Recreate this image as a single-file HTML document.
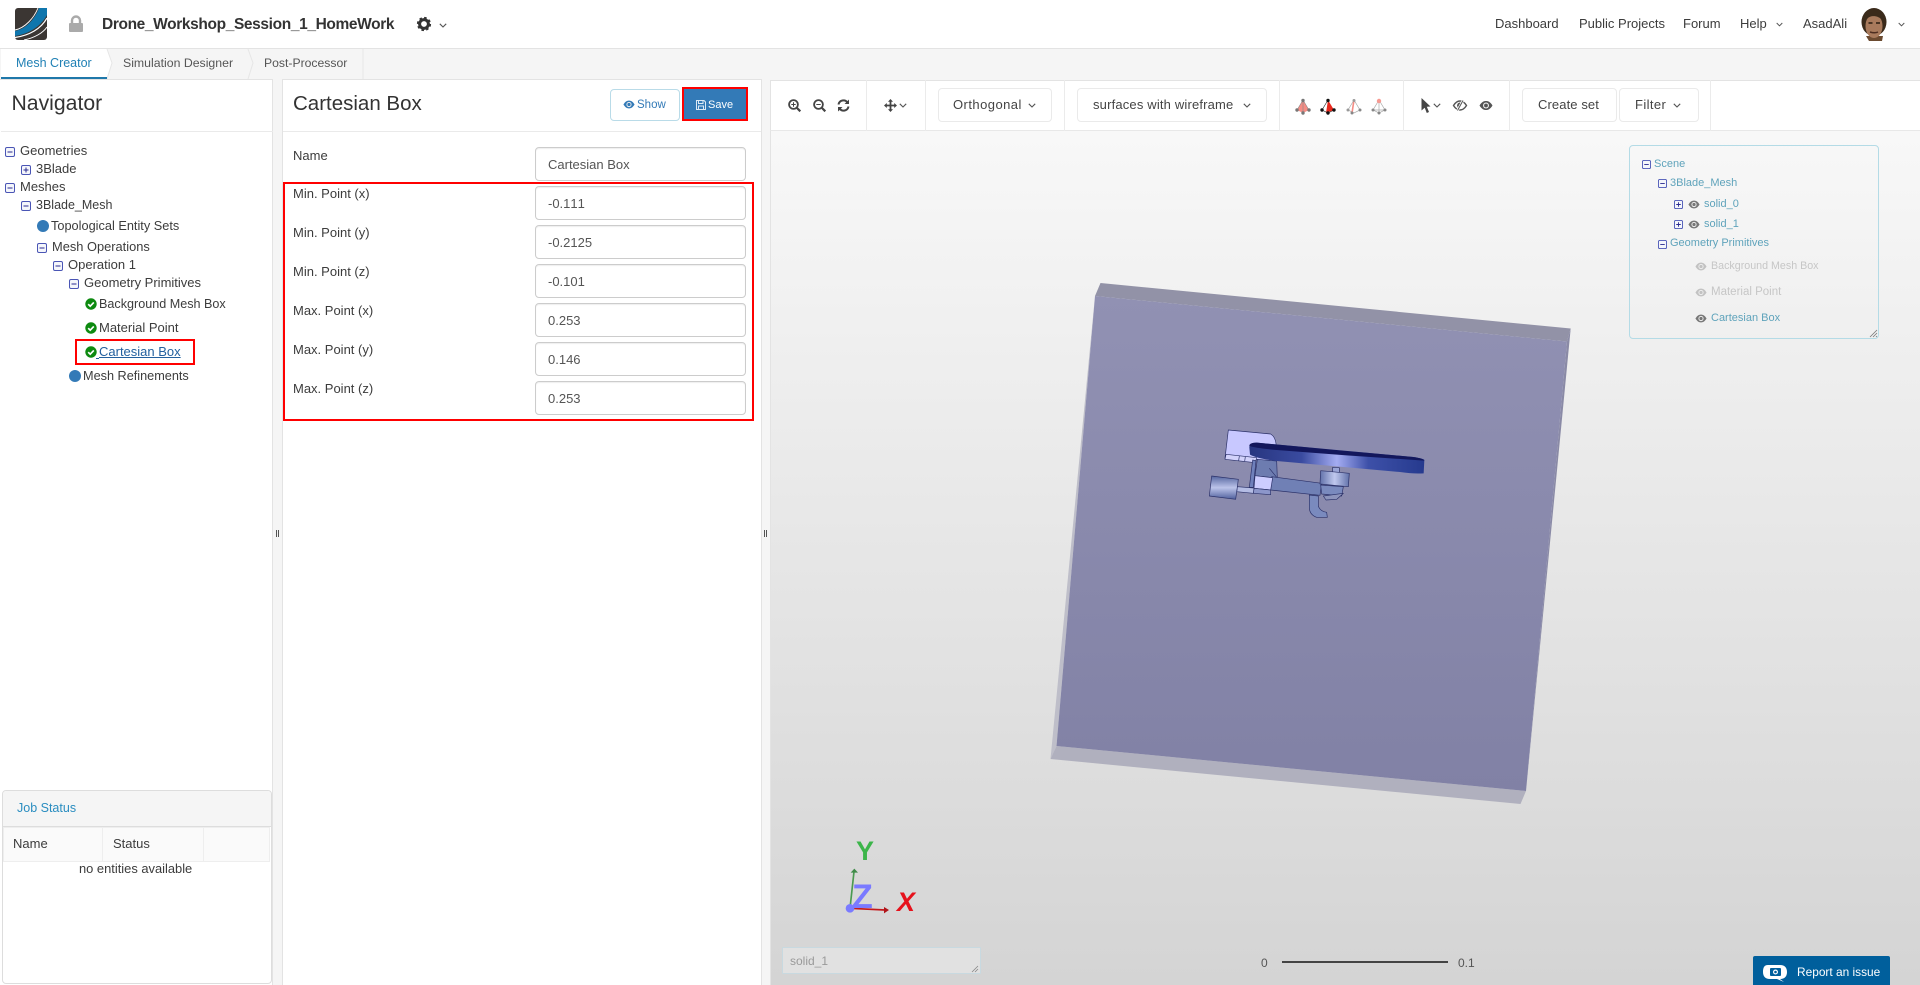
<!DOCTYPE html>
<html><head><meta charset="utf-8"><title>Mesh Creator</title>
<style>
html,body{margin:0;padding:0;width:1920px;height:985px;overflow:hidden;background:#fff}
body{position:relative;font-family:"Liberation Sans",sans-serif;font-size:13px;color:#3c3c3c}
.a{position:absolute}
.t{position:absolute;white-space:nowrap;line-height:20px}
.in{position:absolute;left:535px;width:209px;height:32px;border:1px solid #ccc;border-radius:4px;background:#fff;box-shadow:inset 0 1px 1px rgba(0,0,0,.07);line-height:34px;color:#555;text-indent:12px;font-size:13px;font-kerning:none}
.btn{position:absolute;top:88px;height:32px;border:1px solid #eaeaea;border-radius:4px;background:#fff;box-sizing:content-box}
.sep{position:absolute;top:80px;width:1px;height:51px;background:#ebebeb}
.sc{color:#5fa3bb;font-size:11px}
.sg{color:#c6c6c6;font-size:10.700px}
svg{position:absolute;overflow:visible}
</style></head><body>

<svg width="0" height="0" style="left:0;top:0"><defs>
<symbol id="mi" viewBox="0 0 10 10" overflow="visible"><rect x=".5" y=".5" width="9" height="9" rx="1.500" fill="#f4f6fb" stroke="#4a55b5"/><path d="M2.500 5h5" stroke="#2a2a90"/></symbol>
<symbol id="pl" viewBox="0 0 10 10" overflow="visible"><rect x=".5" y=".5" width="9" height="9" rx="1.500" fill="#f4f6fb" stroke="#4a55b5"/><path d="M2.500 5h5M5 2.500v5" stroke="#2a2a90"/></symbol>
<symbol id="ck" viewBox="0 0 12 12"><circle cx="6" cy="6" r="5.700" fill="#0d8a10"/><path d="M3.200 6.200l2 2 3.600-3.800" fill="none" stroke="#fff" stroke-width="1.700"/></symbol>
<symbol id="ey" viewBox="0 0 14 10"><path d="M.5 5C3 1 5 .5 7 .5S11 1 13.500 5C11 9 9 9.500 7 9.500S3 9 .5 5Z" fill="currentColor"/><circle cx="7" cy="5" r="3" fill="#eee"/><circle cx="7" cy="5" r="1.900" fill="currentColor"/></symbol>
<symbol id="ch" viewBox="0 0 8 5"><path d="M.8.8L4 4 7.200.8" fill="none" stroke="#555" stroke-width="1.100"/></symbol>
<linearGradient id="gf" x1="0" y1="0" x2="0" y2="1"><stop offset="0" stop-color="#9191b3"/><stop offset="1" stop-color="#8181a5"/></linearGradient>
<linearGradient id="gd" x1="0" y1="0" x2="1" y2="0"><stop offset="0" stop-color="#27357f"/><stop offset=".3" stop-color="#3a4ba0"/><stop offset=".5" stop-color="#a4acf2"/><stop offset=".68" stop-color="#3d50a8"/><stop offset="1" stop-color="#263a8e"/></linearGradient>
<linearGradient id="gc" x1="0" y1="0" x2="0" y2="1"><stop offset="0" stop-color="#55659f"/><stop offset=".5" stop-color="#bcc4ea"/><stop offset="1" stop-color="#4f5f9c"/></linearGradient>
<linearGradient id="gm" x1="0" y1="0" x2="1" y2="0"><stop offset="0" stop-color="#6272aa"/><stop offset=".5" stop-color="#c0c8ee"/><stop offset="1" stop-color="#6272aa"/></linearGradient>
</defs></svg>

<!-- header -->
<div class="a" style="left:0;top:0;width:1920px;height:48px;background:#fff;border-bottom:1px solid #e3e3e3"></div>
<svg style="left:15px;top:8px" width="32" height="32" viewBox="0 0 32 32"><rect width="32" height="32" rx="3" fill="#3b3633"/><path d="M0 23C11 21 20 11 24 0H32V7C26 18 14 26 0 28Z" fill="#0f76ad"/><path d="M0 22C10 20 19 10 23 0" stroke="#fff" stroke-width=".9" fill="none"/><path d="M0 29.500C14 27.500 26 21 32 10" stroke="#fff" stroke-width="1.300" fill="none"/><path d="M9 32C19 30 28 25 32 19" stroke="#fff" stroke-width="1" fill="none"/></svg>
<svg style="left:69px;top:15px" width="14" height="17" viewBox="0 0 14 17"><path d="M3 9V5.500a4 4 0 0 1 8 0V9" fill="none" stroke="#aaa" stroke-width="2.400"/><rect y="8" width="14" height="9" rx="1" fill="#aaa"/></svg>
<div class="t" style="left:102px;top:15px;font-size:15.500px;font-weight:bold;color:#333;letter-spacing:-.37px">Drone_Workshop_Session_1_HomeWork</div>
<svg style="left:417px;top:17px" width="14" height="14" viewBox="0 0 14 14"><circle cx="7" cy="7" r="4.400" fill="none" stroke="#333" stroke-width="3"/><circle cx="7" cy="7" r="6" fill="none" stroke="#333" stroke-width="2.200" stroke-dasharray="2.500 2.200"/></svg>
<svg style="left:439px;top:23px" width="8" height="5"><use href="#ch"/></svg>
<div class="t" style="left:1495px;top:14px">Dashboard</div>
<div class="t" style="left:1579px;top:14px">Public Projects</div>
<div class="t" style="left:1683px;top:14px">Forum</div>
<div class="t" style="left:1740px;top:14px">Help</div>
<svg style="left:1776px;top:22px" width="7" height="5"><use href="#ch"/></svg>
<div class="t" style="left:1803px;top:14px">AsadAli</div>
<svg style="left:1861px;top:8px" width="27" height="33" viewBox="0 0 27 33"><ellipse cx="13" cy="14" rx="12.500" ry="14" fill="#3a2a1a"/><path d="M5 28L22 28 21 33H8Z" fill="#6b4a30"/><ellipse cx="13" cy="18" rx="8.500" ry="12" fill="#a87a5c"/><path d="M6 11C9 7 17 7 21 12L20 5H7Z" fill="#3a2a1a"/><path d="M7.500 15h4M15 15h4" stroke="#2b1c10" stroke-width="1.500"/><path d="M9 24c3 1 6 1 8 0" stroke="#4d2d20" stroke-width="1.500" fill="none"/></svg>
<svg style="left:1898px;top:22px" width="7" height="5"><use href="#ch"/></svg>

<!-- tabs -->
<div class="a" style="left:0;top:49px;width:1920px;height:31px;background:#f5f5f5"></div>
<svg style="left:0;top:49px" width="370" height="31" viewBox="0 0 370 31"><path d="M1 0H107L112 14 107 28V28H1Z" fill="#fff"/><path d="M107 0L112 14 107 30M248 0L253 14 248 30M363 0V30" fill="none" stroke="#e6e6e6"/></svg>
<div class="a" style="left:1px;top:77px;width:106px;height:2px;background:#1f78aa"></div>
<div class="t" style="left:16px;top:53px;color:#2181b5;font-size:12.500px">Mesh Creator</div>
<div class="t" style="left:123px;top:53px;color:#555;font-size:12.300px">Simulation Designer</div>
<div class="t" style="left:264px;top:53px;color:#555;font-size:12.200px">Post-Processor</div>

<!-- gutters and panels -->
<div class="a" style="left:0;top:79px;width:273px;height:906px;background:#fff;border-top:1px solid #e3e3e3;border-right:1px solid #e3e3e3;box-sizing:border-box"></div>
<div class="a" style="left:282px;top:79px;width:480px;height:906px;background:#fff;border-top:1px solid #e3e3e3;border-left:1px solid #e3e3e3;border-right:1px solid #e3e3e3;box-sizing:border-box"></div>
<div class="a" style="left:273px;top:80px;width:9px;height:905px;background:#f5f5f5"></div>
<div class="a" style="left:762px;top:80px;width:8px;height:905px;background:#f5f5f5"></div>
<div class="a" style="left:276px;top:530px;width:1px;height:7px;background:#555;box-shadow:2px 0 0 #555"></div>
<div class="a" style="left:764px;top:530px;width:1px;height:7px;background:#555;box-shadow:2px 0 0 #555"></div>
<div class="a" style="left:1px;top:131px;width:272px;height:1px;background:#eaeaea"></div>
<div class="a" style="left:283px;top:131px;width:478px;height:1px;background:#eaeaea"></div>

<!-- navigator -->
<div class="t" style="left:11.500px;top:94px;font-size:21.200px;color:#333">Navigator</div>
<svg style="left:5px;top:147px" width="10" height="10"><use href="#mi"/></svg><div class="t" style="left:20px;top:141px">Geometries</div>
<svg style="left:21px;top:165px" width="10" height="10"><use href="#pl"/></svg><div class="t" style="left:36px;top:159px">3Blade</div>
<svg style="left:5px;top:183px" width="10" height="10"><use href="#mi"/></svg><div class="t" style="left:20px;top:177px">Meshes</div>
<svg style="left:21px;top:201px" width="10" height="10"><use href="#mi"/></svg><div class="t" style="left:36px;top:195px;font-size:12.500px">3Blade_Mesh</div>
<div class="a" style="left:37px;top:220px;width:12px;height:12px;border-radius:50%;background:#337ab7"></div><div class="t" style="left:51px;top:216px;font-size:12.750px">Topological Entity Sets</div>
<svg style="left:37px;top:243px" width="10" height="10"><use href="#mi"/></svg><div class="t" style="left:52px;top:237px;font-size:12.850px">Mesh Operations</div>
<svg style="left:53px;top:261px" width="10" height="10"><use href="#mi"/></svg><div class="t" style="left:68px;top:255px">Operation 1</div>
<svg style="left:69px;top:279px" width="10" height="10"><use href="#mi"/></svg><div class="t" style="left:84px;top:273px">Geometry Primitives</div>
<svg style="left:85px;top:298px" width="12" height="12"><use href="#ck"/></svg><div class="t" style="left:99px;top:294px;font-size:12.600px">Background Mesh Box</div>
<svg style="left:85px;top:322px" width="12" height="12"><use href="#ck"/></svg><div class="t" style="left:99px;top:318px">Material Point</div>
<svg style="left:85px;top:346px" width="12" height="12"><use href="#ck"/></svg><div class="t" style="left:99px;top:342px;color:#23609e;text-decoration:underline">Cartesian Box</div>
<div class="a" style="left:96px;top:358px;width:3px;height:1px;background:#23609e"></div>
<div class="a" style="left:75px;top:339px;width:120px;height:26px;border:2px solid #f00;box-sizing:border-box"></div>
<div class="a" style="left:69px;top:370px;width:12px;height:12px;border-radius:50%;background:#337ab7"></div><div class="t" style="left:83px;top:366px;font-size:12.700px">Mesh Refinements</div>

<!-- job status -->
<div class="a" style="left:2px;top:790px;width:270px;height:194px;border:1px solid #ddd;border-radius:4px;box-sizing:border-box;background:#fff;overflow:hidden">
 <div class="a" style="left:0;top:0;width:100%;height:35px;background:#f5f5f5;border-bottom:1px solid #ddd"></div>
 <div class="a" style="left:0;top:36px;width:100px;height:35px;background:#fafafa;border:1px solid #eee;box-sizing:border-box"></div>
 <div class="a" style="left:100px;top:36px;width:101px;height:35px;background:#fafafa;border:1px solid #eee;border-left:0;box-sizing:border-box"></div>
 <div class="a" style="left:201px;top:36px;width:66px;height:35px;background:#fafafa;border:1px solid #eee;border-left:0;box-sizing:border-box"></div>
</div>
<div class="t" style="left:17px;top:798px;color:#2a8dc0;font-size:12.500px">Job Status</div>
<div class="t" style="left:13px;top:834px">Name</div>
<div class="t" style="left:113px;top:834px">Status</div>
<div class="t" style="left:79px;top:859px;font-size:12.900px">no entities available</div>

<!-- form -->
<div class="t" style="left:293px;top:94px;font-size:20.500px;color:#333">Cartesian Box</div>
<div class="a" style="left:610px;top:89px;width:68px;height:30px;border:1px solid #b9dbe8;border-radius:4px;box-sizing:content-box;background:#fff"></div>
<svg style="left:623px;top:100px;color:#337ab7" width="12" height="9"><use href="#ey" width="12" height="9"/></svg>
<div class="t" style="left:637px;top:95px;color:#337ab7;font-size:11.500px">Show</div>
<div class="a" style="left:684px;top:89px;width:62px;height:30px;background:#337ab7"></div>
<svg style="left:696px;top:100px" width="10" height="10" viewBox="0 0 10 10"><path d="M.5.500H8L9.500 2V9.500H.5Z" fill="none" stroke="#dce9f5"/><path d="M2.500 1V3.500H7V1M2.500 9V6H7.500V9" fill="none" stroke="#dce9f5"/></svg>
<div class="t" style="left:708px;top:95px;color:#fff;font-size:11px">Save</div>
<div class="a" style="left:682px;top:87px;width:66px;height:34px;border:2px solid #f00;box-sizing:border-box"></div>

<div class="t" style="left:293px;top:146px">Name</div>
<div class="in" style="top:147px">Cartesian Box</div>
<div class="t" style="left:293px;top:184px">Min. Point (x)</div><div class="in" style="top:186px">-0.111</div>
<div class="t" style="left:293px;top:223px">Min. Point (y)</div><div class="in" style="top:225px">-0.2125</div>
<div class="t" style="left:293px;top:262px">Min. Point (z)</div><div class="in" style="top:264px">-0.101</div>
<div class="t" style="left:293px;top:301px">Max. Point (x)</div><div class="in" style="top:303px">0.253</div>
<div class="t" style="left:293px;top:340px">Max. Point (y)</div><div class="in" style="top:342px">0.146</div>
<div class="t" style="left:293px;top:379px">Max. Point (z)</div><div class="in" style="top:381px">0.253</div>
<div class="a" style="left:283px;top:182px;width:471px;height:239px;border:2px solid #f00;box-sizing:border-box"></div>

<!-- viewer -->
<div class="a" style="left:770px;top:80px;width:1150px;height:51px;background:#fff;border-left:1px solid #e3e3e3;border-top:1px solid #e3e3e3;border-bottom:1px solid #e8e8e8;box-sizing:border-box"></div>
<div class="a" style="left:770px;top:131px;width:1150px;height:854px;background:linear-gradient(#f8f8f8,#d4d4d4);border-left:1px solid #e3e3e3;box-sizing:border-box"></div>
<div class="sep" style="left:866px"></div><div class="sep" style="left:925px"></div><div class="sep" style="left:1064px"></div><div class="sep" style="left:1279px"></div><div class="sep" style="left:1403px"></div><div class="sep" style="left:1509px"></div><div class="sep" style="left:1710px"></div>

<svg style="left:788px;top:99px" width="13" height="13" viewBox="0 0 13 13"><circle cx="5.500" cy="5.500" r="4.400" fill="none" stroke="#444" stroke-width="1.800"/><path d="M9 9l3.300 3.300" stroke="#444" stroke-width="2.200"/><path d="M3.300 5.500h4.400M5.500 3.300v4.400" stroke="#444"/></svg>
<svg style="left:813px;top:99px" width="13" height="13" viewBox="0 0 13 13"><circle cx="5.500" cy="5.500" r="4.400" fill="none" stroke="#444" stroke-width="1.800"/><path d="M9 9l3.300 3.300" stroke="#444" stroke-width="2.200"/><path d="M3.300 5.500h4.400" stroke="#444"/></svg>
<svg style="left:837px;top:99px" width="13" height="13" viewBox="0 0 13 13"><path d="M1.500 5.500A5 5 0 0 1 10.500 3.500M11.500 7.500A5 5 0 0 1 2.500 9.500" fill="none" stroke="#444" stroke-width="2"/><path d="M12 0.500V5H7.500ZM1 12.500V8H5.500Z" fill="#444"/></svg>
<svg style="left:884px;top:99px" width="13" height="13" viewBox="0 0 13 13"><path d="M6.500 1v11M1 6.500h11" stroke="#444" stroke-width="1.800"/><path d="M6.500 0L9 2.800H4ZM6.500 13L9 10.200H4ZM0 6.500L2.800 4V9ZM13 6.500L10.200 4V9Z" fill="#444"/></svg>
<svg style="left:899px;top:103px" width="8" height="5"><use href="#ch"/></svg>

<div class="btn" style="left:938px;width:112px"></div><div class="t" style="left:953px;top:95px;color:#444;font-size:13px;letter-spacing:.45px">Orthogonal</div><svg style="left:1028px;top:103px" width="8" height="5"><use href="#ch"/></svg>
<div class="btn" style="left:1077px;width:188px"></div><div class="t" style="left:1093px;top:95px;color:#444;font-size:13px;letter-spacing:.17px">surfaces with wireframe</div><svg style="left:1243px;top:103px" width="8" height="5"><use href="#ch"/></svg>

<svg style="left:1295px;top:98px" width="16" height="18" viewBox="0 0 16 18"><path d="M8 2L14 12 8 15 2 12Z" fill="#f58d85"/><path d="M8 2L14 12M8 2L2 12M8 2V15" stroke="#888" stroke-width=".6"/><circle cx="8" cy="2.500" r="1.700" fill="#777"/><circle cx="14" cy="12" r="1.700" fill="#777"/><circle cx="2" cy="12" r="1.700" fill="#777"/><circle cx="8" cy="15" r="1.700" fill="#777"/></svg>
<svg style="left:1320px;top:98px" width="16" height="18" viewBox="0 0 16 18"><path d="M8 2L14 12 6 15Z" fill="#e8281c"/><path d="M8 2L2 12 8 15 14 12" fill="none" stroke="#222" stroke-width=".6"/><circle cx="8" cy="2.500" r="1.700" fill="#111"/><circle cx="14" cy="12" r="1.700" fill="#111"/><circle cx="2" cy="12" r="1.700" fill="#111"/><circle cx="8" cy="15" r="1.700" fill="#111"/></svg>
<svg style="left:1346px;top:98px" width="16" height="18" viewBox="0 0 16 18"><path d="M8 2L14 12 8 15 2 12Z" fill="none" stroke="#aaa" stroke-width=".7"/><path d="M8 2L6 15" stroke="#f58d85" stroke-width="1.600"/><circle cx="8" cy="2.500" r="1.500" fill="#999"/><circle cx="14" cy="12" r="1.500" fill="#888"/><circle cx="2" cy="12" r="1.500" fill="#999"/><circle cx="6" cy="15" r="1.500" fill="#888"/></svg>
<svg style="left:1371px;top:98px" width="16" height="18" viewBox="0 0 16 18"><path d="M8 2L14 12 8 15 2 12ZM8 2V15M2 12L14 12" fill="none" stroke="#aaa" stroke-width=".7"/><circle cx="8" cy="3" r="2.200" fill="#f79a92"/><circle cx="14" cy="12" r="1.500" fill="#888"/><circle cx="2" cy="12" r="1.500" fill="#888"/><circle cx="8" cy="15" r="1.500" fill="#888"/></svg>

<svg style="left:1421px;top:98px" width="10" height="15" viewBox="0 0 10 15"><path d="M.5 0L9.500 8.500 5.800 8.800 8 14 5.800 15 3.700 9.800 .5 12.500Z" fill="#444"/></svg>
<svg style="left:1433px;top:103px" width="8" height="5"><use href="#ch"/></svg>
<svg style="left:1453px;top:100px" width="14" height="11" viewBox="0 0 14 11"><path d="M.5 5.500C3 1.500 5 1 7 1S11 1.500 13.500 5.500C11 9.500 9 10 7 10S3 9.500 .5 5.500Z" fill="none" stroke="#555" stroke-width="1.400"/><path d="M4 5.500A3 3 0 0 1 8 2.700L5 8.500Z" fill="#555"/><path d="M10 .5L4.500 10.500" stroke="#fff" stroke-width="2.400"/><path d="M10 .5L4.500 10.500" stroke="#555" stroke-width="1"/></svg>
<svg style="left:1479px;top:100px;color:#555" width="14" height="11" viewBox="0 0 14 11"><use href="#ey" width="14" height="11"/></svg>

<div class="btn" style="left:1522px;width:93px"></div><div class="t" style="left:1538px;top:95px;color:#444;font-size:13px;letter-spacing:.1px">Create set</div>
<div class="btn" style="left:1619px;width:78px"></div><div class="t" style="left:1635px;top:95px;color:#444;font-size:13px;letter-spacing:.4px">Filter</div><svg style="left:1673px;top:103px" width="8" height="5"><use href="#ch"/></svg>

<!-- 3D scene -->
<svg style="left:0;top:0" width="1920" height="985" viewBox="0 0 1920 985">
<path d="M1100.500 283L1570.700 328.500 1567 341.500 1095 296Z" fill="#9292a7"/>
<path d="M1095 296L1056.500 746 1050.500 759Z" fill="#bebec9"/>
<path d="M1056.500 746L1526 791 1520.500 804 1050.500 759Z" fill="#b0b0be"/>
<path d="M1570.700 328.500L1526 791 1567 341.500Z" fill="#8a8aa6"/>
<path d="M1095 296L1567 341.500 1526 791 1056.500 746Z" fill="url(#gf)"/>
<g transform="translate(1180 410) scale(.33333)" stroke="#2a3068" stroke-width="2" stroke-linejoin="round">
 <path d="M145 60L272 72Q285 80 288 100L290 155 205 146 135 145Z" fill="#c8c8ff"/>
 <path d="M138 133L230 143 226 158 135 148Z" fill="#d2d2fb"/>
 <path d="M178 138L176 152M196 140L194 154" fill="none"/>
 <path d="M218 150L228 152 220 232 208 232Z" fill="#6f80bb"/>
 <path d="M232 148L290 153 292 205 225 197Z" fill="#6d7cb0"/>
 <path d="M268 175L290 202" fill="none"/>
 <path d="M275 200L425 220 420 256 272 240Z" fill="#7080b5"/>
 <path d="M225 197L278 203 272 240 222 235Z" fill="#cdcdff"/>
 <path d="M222 235L272 240 272 254 220 250Z" fill="#8c96ca"/>
 <path d="M172 230L222 234 220 250 170 245Z" fill="#b4bce4"/>
 <path d="M95 198L175 208 167 268 88 258Z" fill="url(#gc)"/>
 <path d="M458 172L478 173 478 188 458 188Z" fill="#9aa4d6"/>
 <path d="M422 225L490 230 485 258 425 252Z" fill="#7a8abe"/>
 <path d="M422 182L508 190 505 230 420 222Z" fill="url(#gm)"/>
 <path d="M430 258L490 250 470 268 438 270Z" fill="#8d94bc"/>
 <path d="M388 255L415 258 415 288Q420 304 440 307L442 322 410 322Q390 315 388 295Z" fill="#7a8abe"/>
 <path d="M208 112Q208 98 230 98L700 141Q733 146 733 150L731 190Q700 192 660 186L290 153Q232 146 210 134Z" fill="url(#gd)" stroke="none"/>
 <path d="M208 108Q208 98 230 98L700 141Q733 146 733 152L500 136 290 120Q225 114 208 108Z" fill="#13175c" stroke="none"/>
</g>
<!-- axes -->
<g transform="translate(770 820) scale(.33333)">
 <path d="M240 265L252 155" stroke="#4a9a50" stroke-width="5"/><path d="M242 158L253 146 264 158Z" fill="#3f8a48"/>
 <path d="M240 265L345 270" stroke="#c4181c" stroke-width="5"/><path d="M342 261L357 270 342 280Z" fill="#b0141a"/>
 <circle cx="240" cy="265" r="13" fill="#7a7aff"/>
</g>
<text x="852" y="908" font-family="Liberation Sans" font-weight="bold" font-size="34" fill="#7a7aff">Z</text>
<text x="865" y="860" font-family="Liberation Sans" font-weight="bold" font-size="27" fill="#3cb54a" text-anchor="middle">Y</text>
<text x="906" y="911" font-family="Liberation Sans" font-weight="bold" font-style="italic" font-size="27" fill="#e6121c" text-anchor="middle">X</text>
</svg>

<!-- scene tree -->
<div class="a" style="left:1629px;top:145px;width:250px;height:194px;border:1px solid #b4dbe6;border-radius:4px;box-sizing:border-box"></div>
<svg style="left:1869px;top:329px" width="9" height="9" viewBox="0 0 9 9"><path d="M1 8L8 1M4 8L8 4M7 8L8 7" stroke="#777" stroke-width=".8"/></svg>
<svg style="left:1642px;top:160px" width="9" height="9" viewBox="0 0 10 10"><use href="#mi" width="10" height="10"/></svg><div class="t sc" style="left:1654px;top:154px">Scene</div>
<svg style="left:1658px;top:179px" width="9" height="9" viewBox="0 0 10 10"><use href="#mi" width="10" height="10"/></svg><div class="t sc" style="left:1670px;top:173px">3Blade_Mesh</div>
<svg style="left:1674px;top:200px" width="9" height="9" viewBox="0 0 10 10"><use href="#pl" width="10" height="10"/></svg><svg style="left:1688px;top:200px;color:#777" width="12" height="9"><use href="#ey" width="12" height="9"/></svg><div class="t sc" style="left:1704px;top:194px">solid_0</div>
<svg style="left:1674px;top:220px" width="9" height="9" viewBox="0 0 10 10"><use href="#pl" width="10" height="10"/></svg><svg style="left:1688px;top:220px;color:#777" width="12" height="9"><use href="#ey" width="12" height="9"/></svg><div class="t sc" style="left:1704px;top:214px">solid_1</div>
<svg style="left:1658px;top:240px" width="9" height="9" viewBox="0 0 10 10"><use href="#mi" width="10" height="10"/></svg><div class="t sc" style="left:1670px;top:233px">Geometry Primitives</div>
<svg style="left:1695px;top:262px;color:#c2c2c2" width="12" height="9"><use href="#ey" width="12" height="9"/></svg><div class="t sg" style="left:1711px;top:256px">Background Mesh Box</div>
<svg style="left:1695px;top:288px;color:#c2c2c2" width="12" height="9"><use href="#ey" width="12" height="9"/></svg><div class="t sg" style="left:1711px;top:282px;font-size:11.500px">Material Point</div>
<svg style="left:1695px;top:314px;color:#777" width="12" height="9"><use href="#ey" width="12" height="9"/></svg><div class="t sc" style="left:1711px;top:308px">Cartesian Box</div>

<!-- bottom overlays -->
<div class="a" style="left:782px;top:947px;width:199px;height:27px;background:#e1e1e1;border:1px solid #c8d9e0;box-sizing:border-box;border-radius:1px"></div>
<div class="t" style="left:790px;top:951px;font-size:12px;color:#999">solid_1</div>
<svg style="left:971px;top:965px" width="8" height="8" viewBox="0 0 8 8"><path d="M1 7L7 1M4 7L7 4" stroke="#888" stroke-width=".8"/></svg>
<div class="t" style="left:1261px;top:953px;font-size:12px;color:#555">0</div>
<div class="a" style="left:1282px;top:961px;width:166px;height:2px;background:#444"></div>
<div class="t" style="left:1458px;top:953px;font-size:12px;color:#555">0.1</div>
<div class="a" style="left:1753px;top:956px;width:137px;height:29px;background:#005f9c;border-radius:2px 2px 0 0"></div>
<svg style="left:1762px;top:964px" width="26" height="18" viewBox="0 0 26 18"><path d="M6 1H18C23 1 25 4 25 8S23 15 18 15L22 18 15 15H8C3 15 1 12 1 8S2 1 6 1Z" fill="#fff"/><rect x="8" y="4" width="11" height="8" rx="1" fill="#005f9c"/><circle cx="13.500" cy="8" r="2.500" fill="#fff"/><circle cx="13.500" cy="8" r="1.300" fill="#005f9c"/></svg>
<div class="t" style="left:1797px;top:962px;font-size:11.900px;color:#fff">Report an issue</div>

</body></html>
